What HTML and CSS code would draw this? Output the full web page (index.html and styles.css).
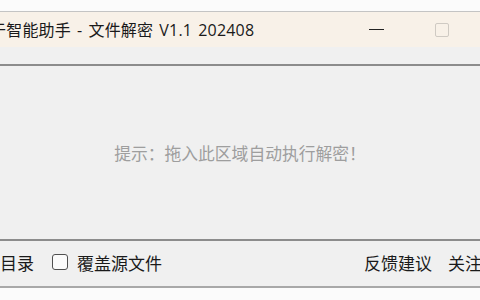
FILE: index.html
```html
<!DOCTYPE html>
<html>
<head>
	<title>文件解密</title>
	<link rel="stylesheet" href="styles.css">
</head>
<body>
	<div class="desk"></div>
	<div class="window">
		<div class="titlebar">
			<div class="title">于智能助手 - 文件解密 V1.1 202408</div>
			<div class="btn-min"></div>
			<div class="btn-max"></div>
		</div>
		<div class="toolbar"></div>
		<div class="drop">提示：拖入此区域自动执行解密！</div>
		<div class="footer">
			<span class="link">目录</span>
			<label class="check"><span class="box"></span>覆盖源文件</label>
			<span class="spacer"></span>
			<span class="link">反馈建议</span>
			<span class="link last">关注</span>
		</div>
	</div>
</body>
</html>
```

FILE: styles.css
```css
* {
	margin: 0;
	padding: 0;
	box-sizing: border-box;
}

body {
	width: 480px;
	height: 300px;
	overflow: hidden;
	background-color: #fbfbfb;
	font-family: "Noto Sans CJK SC", "Noto Sans", sans-serif;
	color: #1a1a1a;
}

.desk {
	height: 12px;
	background-color: #fbfbfb;
	border-bottom: 1px solid #c4c4c4;
}

.window {
	background-color: #f0f0f0;
	border-bottom: 2px solid #a8a8a8;
}

.titlebar {
	display: flex;
	align-items: center;
	height: 35px;
	background-color: #f8f1e8;
}

.title {
	flex: 1;
	margin-left: -10px;
	padding-top: 1px;
	font-family: "Open Sans", "Noto Sans CJK SC", sans-serif;
	font-size: 16px;
	letter-spacing: 0.2px;
	word-spacing: 1.7px;
	white-space: nowrap;
	line-height: 34px;
}

.btn-min {
	width: 15px;
	height: 1px;
	background-color: #222;
	margin-right: 51px;
}

.btn-max {
	width: 14px;
	height: 14px;
	border: 1px solid #cfcac3;
	border-radius: 2px;
	margin-right: 31px;
}

.toolbar {
	height: 19px;
	border-bottom: 2px solid #8c8c8c;
}

.drop {
	height: 175px;
	display: flex;
	align-items: center;
	justify-content: center;
	font-size: 16.8px;
	color: #9e9e9e;
	padding-top: 1px;
	border-bottom: 2px solid #8c8c8c;
}

.footer {
	display: flex;
	align-items: center;
	height: 45px;
	font-size: 17px;
	padding-bottom: 3px;
}

.link {
	white-space: nowrap;
}

.check {
	display: flex;
	align-items: center;
	margin-left: 18px;
}

.box {
	width: 16px;
	height: 16px;
	border: 1px solid #505050;
	border-radius: 3px;
	background-color: #fbfbfb;
	margin-right: 9px;
}

.spacer {
	flex: 1;
}

.last {
	margin-left: 16px;
	margin-right: -2px;
}
```
